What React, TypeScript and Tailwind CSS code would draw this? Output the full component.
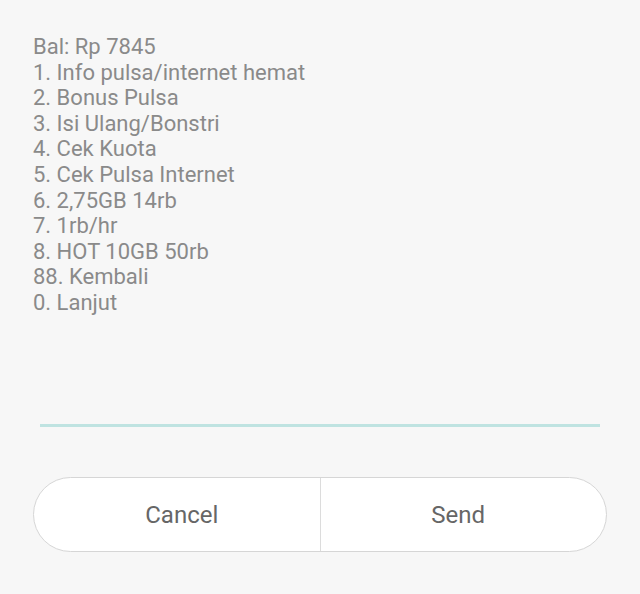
export default function App() {
  const lines = [
    'Bal: Rp 7845',
    '1. Info pulsa/internet hemat',
    '2. Bonus Pulsa',
    '3. Isi Ulang/Bonstri',
    '4. Cek Kuota',
    '5. Cek Pulsa Internet',
    '6. 2,75GB 14rb',
    '7. 1rb/hr',
    '8. HOT 10GB 50rb',
    '88. Kembali',
    '0. Lanjut',
  ];

  return (
    <div className="w-[640px] h-[594px] bg-[#f7f7f7] flex flex-col" style={{ fontFamily: 'Roboto, "Noto Sans", sans-serif' }}>
      <div className="pl-[33px] pt-[34px] text-[22px] leading-[25.6px] text-[#8a8a8a]">
        {lines.map((l) => (
          <div key={l}>{l}</div>
        ))}
      </div>
      <div className="mt-[108px] mx-[40px] h-[3px] bg-[#bfe3e1]" />
      <div className="mt-[50px] mx-[33px] h-[75px] flex rounded-full border border-[#d6d6d6] bg-white overflow-hidden">
        <button className="flex-1 pl-[10px] pt-[2px] text-[24px] text-[#666666]">Cancel</button>
        <div className="w-px bg-[#dcdcdc]" />
        <button className="flex-1 pr-[10px] pt-[2px] text-[24px] text-[#666666]">Send</button>
      </div>
    </div>
  );
}
